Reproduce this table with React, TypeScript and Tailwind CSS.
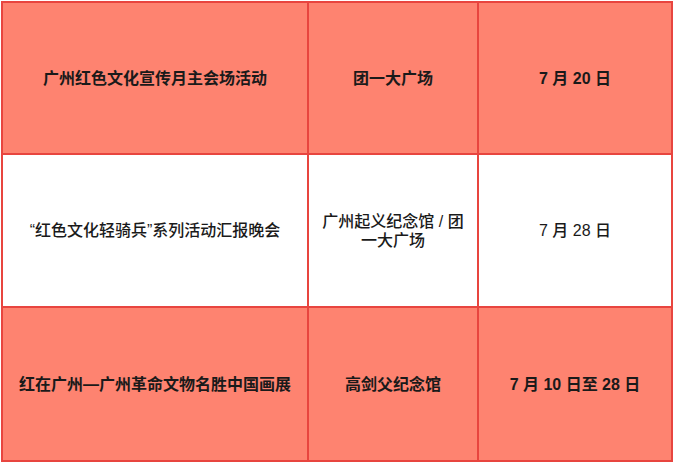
const rows = [
  {
    event: "广州红色文化宣传月主会场活动",
    place: "团一大广场",
    date: "7 月 20 日",
    tint: true,
    h: "h-[150px]",
  },
  {
    event: "“红色文化轻骑兵”系列活动汇报晚会",
    place: "广州起义纪念馆 / 团一大广场",
    date: "7 月 28 日",
    tint: false,
    h: "h-[151px]",
  },
  {
    event: "红在广州—广州革命文物名胜中国画展",
    place: "高剑父纪念馆",
    date: "7 月 10 日至 28 日",
    tint: true,
    h: "h-[152px]",
  },
];

export default function App() {
  return (
    <div className="w-[674px] h-[463px] bg-white pl-[1px] pt-[1px] font-['Liberation_Sans','Noto_Sans_CJK_SC',sans-serif] text-[16px] text-[#1a1a1a]">
      <div className="grid grid-cols-[304px_168px_192px] gap-[2px] p-[2px] bg-[#e8453f] w-[672px]">
        {rows.map((r, i) => {
          const cell =
            "flex items-center justify-center text-center px-2 leading-[19px] " +
            r.h +
            " " +
            (r.tint ? "bg-[#fe8370] font-bold" : "bg-white font-medium");
          return [
            <div key={i + "a"} className={cell}>
              {r.event}
            </div>,
            <div key={i + "b"} className={cell}>
              {r.place}
            </div>,
            <div key={i + "c"} className={cell}>
              {r.date}
            </div>,
          ];
        })}
      </div>
    </div>
  );
}
